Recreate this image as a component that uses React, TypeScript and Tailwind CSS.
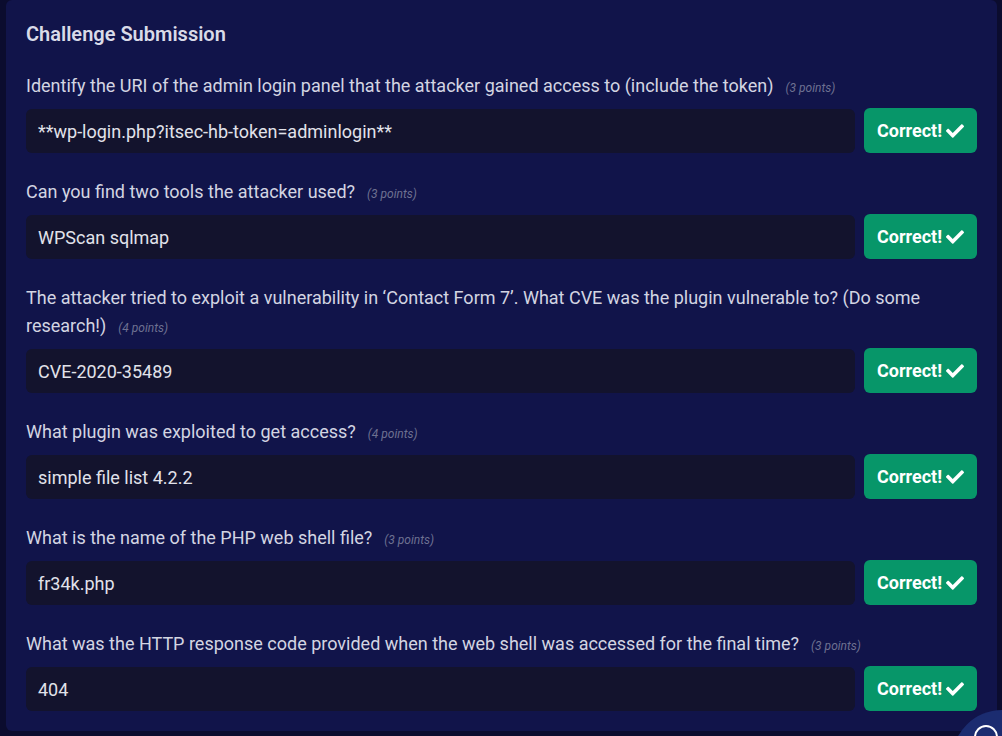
import { FaCheck } from "react-icons/fa";

interface Question {
  text: string;
  points: number;
  answer: string;
}

const QUESTIONS: Question[] = [
  {
    text: "Identify the URI of the admin login panel that the attacker gained access to (include the token)",
    points: 3,
    answer: "**wp-login.php?itsec-hb-token=adminlogin**",
  },
  { text: "Can you find two tools the attacker used?", points: 3, answer: "WPScan sqlmap" },
  {
    text: "The attacker tried to exploit a vulnerability in \u2018Contact Form 7\u2019. What CVE was the plugin vulnerable to? (Do some research!)",
    points: 4,
    answer: "CVE-2020-35489",
  },
  { text: "What plugin was exploited to get access?", points: 4, answer: "simple file list 4.2.2" },
  { text: "What is the name of the PHP web shell file?", points: 3, answer: "fr34k.php" },
  {
    text: "What was the HTTP response code provided when the web shell was accessed for the final time?",
    points: 3,
    answer: "404",
  },
];

const App = () => {
  return (
    <div
      className="relative w-[1002px] h-[736px] overflow-hidden bg-[#0b0c2e] pl-[6px]"
      style={{ fontFamily: "Roboto, 'Liberation Sans', sans-serif" }}
    >
      {/* Submission card */}
      <div className="w-[991px] rounded-md bg-[#11144a] px-5 pt-5 pb-5">
        <h2 className="text-[20px] leading-7 font-semibold text-[#d9dbe8]">Challenge Submission</h2>

        <div className="mt-6 flex flex-col gap-[25px]">
          {QUESTIONS.map((q, i) => (
            <div key={i}>
              <p className="text-[18px] leading-7 text-[#d3d5e2]">
                {q.text}
                <span className="ml-3 text-[12px] leading-none italic text-[#6e7191]">({q.points} points)</span>
              </p>
              <div className="mt-[9px] flex gap-[9px]">
                <div className="flex h-[44px] flex-1 items-center rounded-md bg-[#13132d] px-3 text-[18px] text-[#e1e2ea]">
                  {q.answer}
                </div>
                <button className="flex h-[45px] w-[113px] -mt-px items-center justify-center gap-1 rounded-md bg-[#079669] text-[18px] font-bold text-white">
                  Correct!
                  <FaCheck className="h-[18px] w-[18px]" />
                </button>
              </div>
            </div>
          ))}
        </div>
      </div>

      {/* Chat bubble (overlaps bottom right corner) */}
      <div className="absolute left-[952px] top-[710px] flex h-[100px] w-[100px] items-start justify-start rounded-full bg-[#1b2c70]">
        <div className="ml-[22px] mt-[15px] h-[24px] w-[24px] rounded-full border-2 border-white" />
      </div>
    </div>
  );
};

export default App;
